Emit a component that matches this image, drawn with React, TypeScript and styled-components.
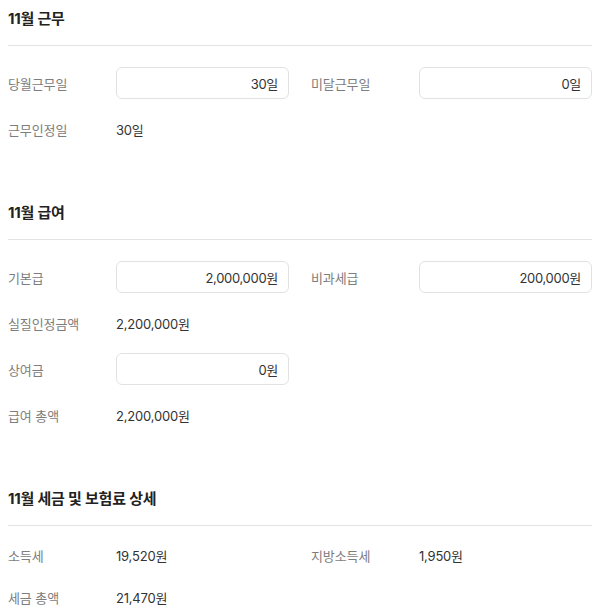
import React from "react";
import styled, { createGlobalStyle } from "styled-components";

const Global = createGlobalStyle`
  html, body { margin: 0; padding: 0; background: #ffffff; }
  body { font-family: "Inter", "Noto Sans CJK KR", "Noto Sans", sans-serif; }
  * { box-sizing: border-box; }
`;

const Page = styled.div`
  padding: 9px 8px 0 8px;
  display: flex;
  flex-direction: column;
  gap: 58px;
`;

const Section = styled.section`
  display: flex;
  flex-direction: column;
`;

const Title = styled.h2`
  margin: 0;
  font-size: 15px;
  line-height: 20px;
  font-weight: 700;
  color: #222;
  letter-spacing: -0.2px;
`;

const Divider = styled.hr`
  margin: 16px 0 0 0;
  border: 0;
  height: 1px;
  background: #e3e3e3;
`;

const Rows = styled.div<{ $top: number; $gap: number }>`
  display: flex;
  flex-direction: column;
  padding-top: ${(p) => p.$top}px;
  gap: ${(p) => p.$gap}px;
`;

const Row = styled.div<{ $h: number }>`
  display: flex;
  gap: 22px;
  min-height: ${(p) => p.$h}px;
`;

const Field = styled.div`
  flex: 1 1 0;
  display: grid;
  grid-template-columns: 108px 1fr;
  align-items: center;
`;

const Label = styled.span`
  font-size: 13px;
  color: #7d7d7d;
  letter-spacing: -0.1px;
`;

const Value = styled.span`
  font-size: 13px;
  color: #333;
  letter-spacing: -0.2px;
`;

const Input = styled.div`
  height: 32px;
  border: 1px solid #e2e2e2;
  border-radius: 6px;
  background: #fff;
  display: flex;
  align-items: center;
  justify-content: flex-end;
  padding: 0 10px;
  font-size: 13px;
  color: #333;
  letter-spacing: -0.3px;
`;

type F = { label: string; value: string; input?: boolean };

const FieldView = ({ f }: { f?: F }) =>
  f ? (
    <Field>
      <Label>{f.label}</Label>
      {f.input ? <Input>{f.value}</Input> : <Value>{f.value}</Value>}
    </Field>
  ) : (
    <Field />
  );

const sections: { title: string; top: number; gap: number; h: number; rows: [F, F?][] }[] = [
  {
    title: "11월 근무",
    top: 21,
    gap: 14,
    h: 32,
    rows: [
      [
        { label: "당월근무일", value: "30일", input: true },
        { label: "미달근무일", value: "0일", input: true },
      ],
      [{ label: "근무인정일", value: "30일" }],
    ],
  },
  {
    title: "11월 급여",
    top: 21,
    gap: 14,
    h: 32,
    rows: [
      [
        { label: "기본급", value: "2,000,000원", input: true },
        { label: "비과세급", value: "200,000원", input: true },
      ],
      [{ label: "실질인정금액", value: "2,200,000원" }],
      [{ label: "상여금", value: "0원", input: true }],
      [{ label: "급여 총액", value: "2,200,000원" }],
    ],
  },
  {
    title: "11월 세금 및 보험료 상세",
    top: 15,
    gap: 14,
    h: 28,
    rows: [
      [
        { label: "소득세", value: "19,520원" },
        { label: "지방소득세", value: "1,950원" },
      ],
      [{ label: "세금 총액", value: "21,470원" }],
    ],
  },
];

export default function App() {
  return (
    <>
      <Global />
      <Page>
        {sections.map((s) => (
          <Section key={s.title}>
            <Title>{s.title}</Title>
            <Divider />
            <Rows $top={s.top} $gap={s.gap}>
              {s.rows.map((r, i) => (
                <Row key={i} $h={s.h}>
                  <FieldView f={r[0]} />
                  <FieldView f={r[1]} />
                </Row>
              ))}
            </Rows>
          </Section>
        ))}
      </Page>
    </>
  );
}
